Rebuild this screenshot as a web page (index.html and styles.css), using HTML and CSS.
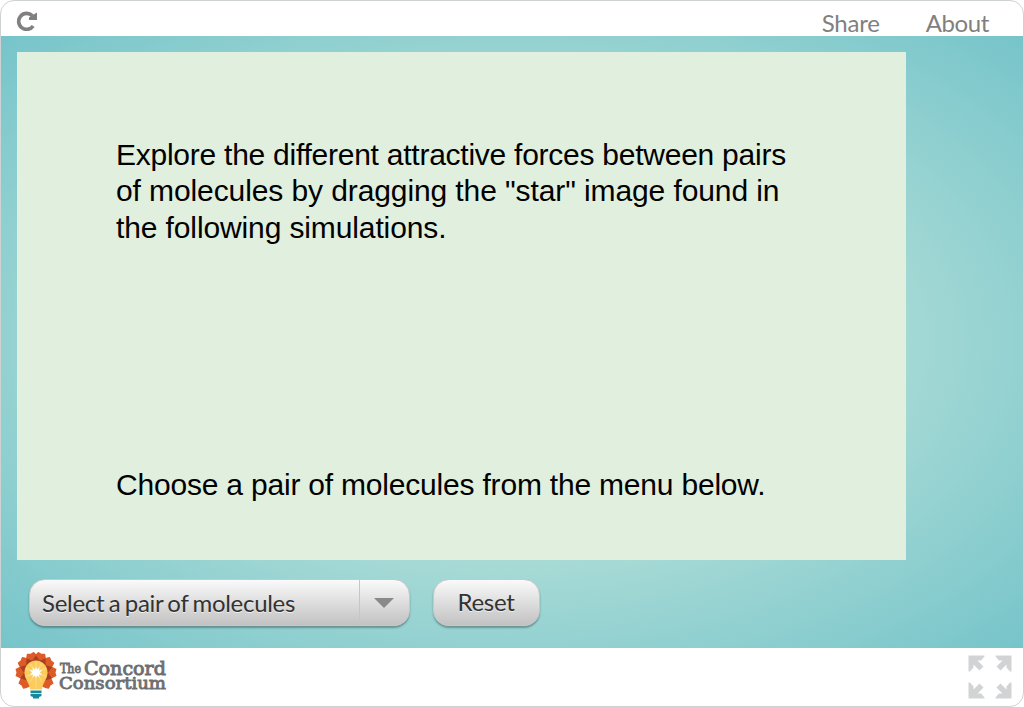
FILE: index.html
```html
<!DOCTYPE html>
<html lang="en">
<head>
<meta charset="utf-8">
<title>Interactive</title>
<link rel="stylesheet" href="styles.css">
</head>
<body>
<div class="frame">
  <header class="topbar">
    <svg class="reload" width="22" height="22" viewBox="0 0 22 22">
      <path d="M17.200 17A8 8 0 1 1 16.400 6.800" fill="none" stroke="#808080" stroke-width="3.600"/>
      <path d="M21 3.500v7.500h-8v-2.500l2-1.500z" fill="#808080"/>
    </svg>
    <nav class="links"><a>Share</a><a class="about">About</a></nav>
  </header>
  <main class="stage">
    <section class="panel">
      <p class="intro"><span class="line l1">Explore the different attractive forces between pairs</span><span class="line l2">of molecules by dragging the "star" image found in</span><span class="line l3">the following simulations.</span></p>
      <p class="hint">Choose a pair of molecules from the menu below.</p>
    </section>
    <div class="controls">
      <div class="select"><span class="label">Select a pair of molecules</span><span class="arrow"><svg width="20" height="10" viewBox="0 0 20 10"><path d="M0 0h20L10 10z" fill="#898989"/></svg></span></div>
      <button class="reset">Reset</button>
    </div>
  </main>
  <footer class="footer">
    <svg class="logo" width="170" height="50" viewBox="0 0 170 50">
      <g transform="translate(22 20.500)">
        <g fill="#dc5b27">
          <path id="petal" d="M0 0L-6-10C-7-14-5.500-17-3.500-20.500L0-19.500L3.500-20.500C5.500-17 7-14 6-10Z" transform="rotate(16)"/>
          <use href="#petal" transform="rotate(-32)"/>
          <use href="#petal" transform="rotate(36)"/>
          <use href="#petal" transform="rotate(-68)"/>
          <use href="#petal" transform="rotate(74)"/>
          <use href="#petal" transform="rotate(-106)"/>
          <use href="#petal" transform="rotate(116)"/>
          <use href="#petal" transform="rotate(-148)"/>
        </g>
        <g fill="#a93e20">
          <path id="fold" d="M0-17L4-11.500L0-9L-4-11.500Z"/>
          <use href="#fold" transform="rotate(34)"/>
          <use href="#fold" transform="rotate(-34)"/>
          <use href="#fold" transform="rotate(71)"/>
          <use href="#fold" transform="rotate(-71)"/>
          <use href="#fold" transform="rotate(111)"/>
          <use href="#fold" transform="rotate(-111)"/>
        </g>
        <path d="M-6 17C-6.500 10-11.500 7-11.500 0A11.500 12 0 0 1 11.500 0C11.500 7 6.500 10 6 17Z" fill="#fbcb5c"/>
        <path d="M0-11V16M-10-4L10 4M-10 4L10-4M-6-9L6 9M6-9L-6 9" stroke="#fcd67a" stroke-width="1.500"/>
        <path d="M0-6L1-3L3.500-5L3-2L6-2.500L4 0L6 2.500L3 2L3.500 5L1 3L0 6L-1 3L-3.500 5L-3 2L-6 2.500L-4 0L-6-2.500L-3-2L-3.500-5L-1-3Z" fill="#fff"/>
        <path d="M-5.500 18H5.500V20.600H-5.500ZM-5.500 21.300H5.500V23.500L3 24.500V26H-3V24.500L-5.500 23.500Z" fill="#16889a"/>
      </g>
      <g class="wordmark">
        <text x="46" y="20.500" font-size="12.500" textLength="21" lengthAdjust="spacingAndGlyphs">The</text>
        <text x="70" y="22.500" font-size="18.500" textLength="82" lengthAdjust="spacingAndGlyphs">Concord</text>
        <text x="45" y="37" font-size="17.500" textLength="107" lengthAdjust="spacingAndGlyphs">Consortium</text>
      </g>
    </svg>
    <svg class="expand" width="44" height="44" viewBox="0 0 44 44" fill="#d1d3d4">
      <path id="corner" d="M0.500 0.500H16.500V1.500L13 5.500H9.500L15.500 11.500L11.500 15.500L5.500 9.500V12.500L2 16.500H0.500Z"/>
      <use href="#corner" transform="translate(44 0) scale(-1 1)"/>
      <use href="#corner" transform="translate(0 44) scale(1 -1)"/>
      <use href="#corner" transform="translate(44 44) scale(-1 -1)"/>
    </svg>
  </footer>
</div>
</body>
</html>
```
FILE: styles.css
```css
* { box-sizing: border-box; }
body { margin: 0; background: #fff; font-family: Lato, sans-serif; }
.frame { width: 1024px; height: 707px; border: 1px solid #ced2d2; border-radius: 14px; overflow: hidden; display: flex; flex-direction: column; background: #fff; }
.topbar { height: 35px; flex: none; display: flex; justify-content: space-between; padding: 8px 34px 0 15px; }
.links { display: flex; gap: 46px; font-size: 24px; line-height: 28px; color: #808080; letter-spacing: -0.2px; }
.about { letter-spacing: -0.4px; }
.stage { height: 612px; flex: none; padding: 16px 16px 0; background: radial-gradient(ellipse farthest-corner at center, #daf1e1, #76c4ca); }
.panel { width: 889px; height: 508px; background: #e0efde; padding: 85px 0 0 99px; font-family: "Liberation Sans", Arial, sans-serif; font-size: 30px; line-height: 36px; color: #000; white-space: nowrap; }
.intro, .hint { margin: 0; }
.line { display: block; }
.l1 { letter-spacing: -0.25px; }
.l2 { letter-spacing: -0.1px; }
.l3 { letter-spacing: -0.12px; line-height: 38px; }
.hint { margin-top: 220px; letter-spacing: -0.2px; }
.controls { display: flex; gap: 23px; padding: 19px 0 0 12px; }
.select, .reset { height: 47px; border: 1px solid #c8c8c8; border-radius: 16px; background: linear-gradient(#fafafa, #c2c2c2); box-shadow: 0 2px 2px rgba(0, 0, 0, .3); color: #333; text-shadow: 0 1px 0 #eee; font: 24px Lato, sans-serif; }
.select { width: 381px; display: flex; }
.label { flex: 1; padding-left: 12px; line-height: 45px; white-space: nowrap; letter-spacing: -0.3px; word-spacing: -1.400px; }
.arrow { width: 50px; display: flex; align-items: center; justify-content: center; border-left: 1px solid #c6c6c6; padding-right: 2px; }
.reset { width: 107px; padding: 0 1px 2px 0; line-height: 42px; letter-spacing: -0.3px; }
.footer { height: 58px; flex: none; display: flex; justify-content: space-between; padding: 4px 11px 0 13px; }
.expand { margin-top: 3px; }
.wordmark { font-family: "DejaVu Serif", serif; fill: #6d6e70; stroke: #6d6e70; stroke-width: 0.9px; }
```
